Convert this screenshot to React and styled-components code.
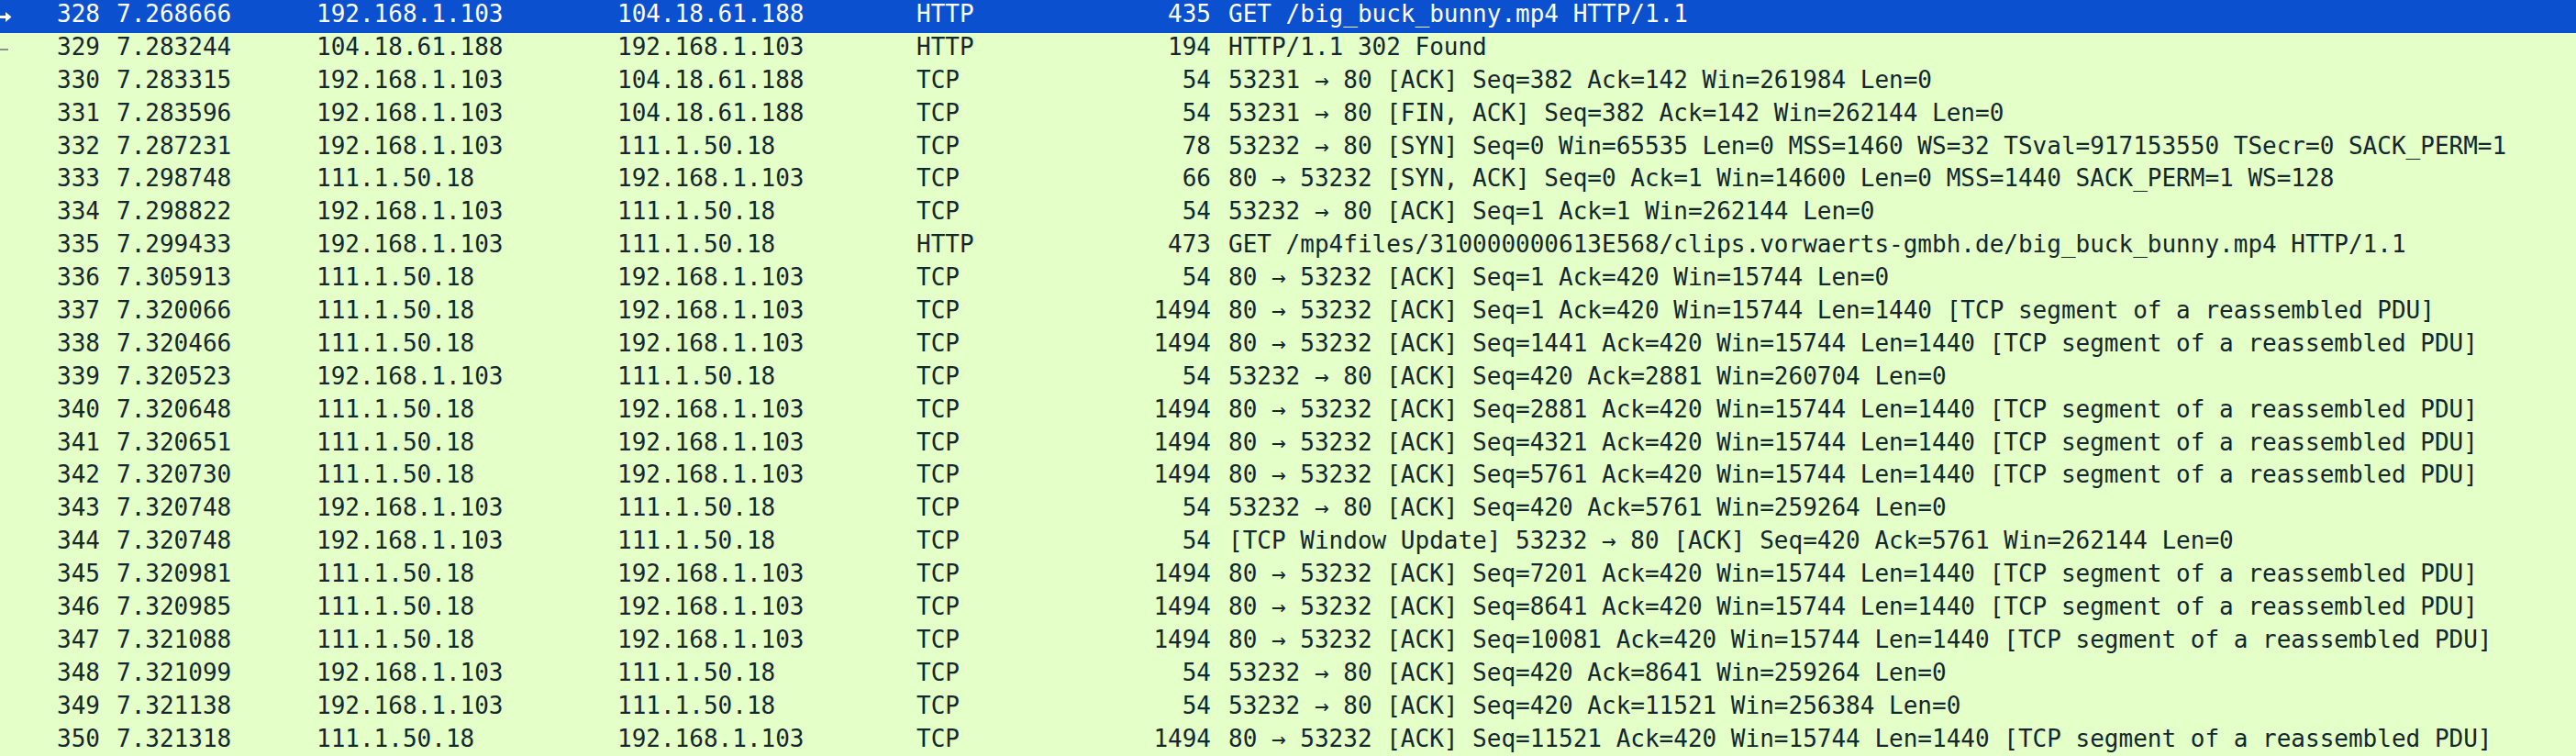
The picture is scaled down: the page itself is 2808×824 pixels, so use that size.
import React from "react";
import styled, { createGlobalStyle } from "styled-components";

const GlobalStyle = createGlobalStyle`
  html, body {
    margin: 0;
    padding: 0;
    background: #e4ffc7;
    overflow: hidden;
  }
`;

const packets = [
  ["328", "7.268666", "192.168.1.103", "104.18.61.188", "HTTP", "435", "GET /big_buck_bunny.mp4 HTTP/1.1"],
  ["329", "7.283244", "104.18.61.188", "192.168.1.103", "HTTP", "194", "HTTP/1.1 302 Found"],
  ["330", "7.283315", "192.168.1.103", "104.18.61.188", "TCP", "54", "53231 → 80 [ACK] Seq=382 Ack=142 Win=261984 Len=0"],
  ["331", "7.283596", "192.168.1.103", "104.18.61.188", "TCP", "54", "53231 → 80 [FIN, ACK] Seq=382 Ack=142 Win=262144 Len=0"],
  ["332", "7.287231", "192.168.1.103", "111.1.50.18", "TCP", "78", "53232 → 80 [SYN] Seq=0 Win=65535 Len=0 MSS=1460 WS=32 TSval=917153550 TSecr=0 SACK_PERM=1"],
  ["333", "7.298748", "111.1.50.18", "192.168.1.103", "TCP", "66", "80 → 53232 [SYN, ACK] Seq=0 Ack=1 Win=14600 Len=0 MSS=1440 SACK_PERM=1 WS=128"],
  ["334", "7.298822", "192.168.1.103", "111.1.50.18", "TCP", "54", "53232 → 80 [ACK] Seq=1 Ack=1 Win=262144 Len=0"],
  ["335", "7.299433", "192.168.1.103", "111.1.50.18", "HTTP", "473", "GET /mp4files/310000000613E568/clips.vorwaerts-gmbh.de/big_buck_bunny.mp4 HTTP/1.1"],
  ["336", "7.305913", "111.1.50.18", "192.168.1.103", "TCP", "54", "80 → 53232 [ACK] Seq=1 Ack=420 Win=15744 Len=0"],
  ["337", "7.320066", "111.1.50.18", "192.168.1.103", "TCP", "1494", "80 → 53232 [ACK] Seq=1 Ack=420 Win=15744 Len=1440 [TCP segment of a reassembled PDU]"],
  ["338", "7.320466", "111.1.50.18", "192.168.1.103", "TCP", "1494", "80 → 53232 [ACK] Seq=1441 Ack=420 Win=15744 Len=1440 [TCP segment of a reassembled PDU]"],
  ["339", "7.320523", "192.168.1.103", "111.1.50.18", "TCP", "54", "53232 → 80 [ACK] Seq=420 Ack=2881 Win=260704 Len=0"],
  ["340", "7.320648", "111.1.50.18", "192.168.1.103", "TCP", "1494", "80 → 53232 [ACK] Seq=2881 Ack=420 Win=15744 Len=1440 [TCP segment of a reassembled PDU]"],
  ["341", "7.320651", "111.1.50.18", "192.168.1.103", "TCP", "1494", "80 → 53232 [ACK] Seq=4321 Ack=420 Win=15744 Len=1440 [TCP segment of a reassembled PDU]"],
  ["342", "7.320730", "111.1.50.18", "192.168.1.103", "TCP", "1494", "80 → 53232 [ACK] Seq=5761 Ack=420 Win=15744 Len=1440 [TCP segment of a reassembled PDU]"],
  ["343", "7.320748", "192.168.1.103", "111.1.50.18", "TCP", "54", "53232 → 80 [ACK] Seq=420 Ack=5761 Win=259264 Len=0"],
  ["344", "7.320748", "192.168.1.103", "111.1.50.18", "TCP", "54", "[TCP Window Update] 53232 → 80 [ACK] Seq=420 Ack=5761 Win=262144 Len=0"],
  ["345", "7.320981", "111.1.50.18", "192.168.1.103", "TCP", "1494", "80 → 53232 [ACK] Seq=7201 Ack=420 Win=15744 Len=1440 [TCP segment of a reassembled PDU]"],
  ["346", "7.320985", "111.1.50.18", "192.168.1.103", "TCP", "1494", "80 → 53232 [ACK] Seq=8641 Ack=420 Win=15744 Len=1440 [TCP segment of a reassembled PDU]"],
  ["347", "7.321088", "111.1.50.18", "192.168.1.103", "TCP", "1494", "80 → 53232 [ACK] Seq=10081 Ack=420 Win=15744 Len=1440 [TCP segment of a reassembled PDU]"],
  ["348", "7.321099", "192.168.1.103", "111.1.50.18", "TCP", "54", "53232 → 80 [ACK] Seq=420 Ack=8641 Win=259264 Len=0"],
  ["349", "7.321138", "192.168.1.103", "111.1.50.18", "TCP", "54", "53232 → 80 [ACK] Seq=420 Ack=11521 Win=256384 Len=0"],
  ["350", "7.321318", "111.1.50.18", "192.168.1.103", "TCP", "1494", "80 → 53232 [ACK] Seq=11521 Ack=420 Win=15744 Len=1440 [TCP segment of a reassembled PDU]"],
];

const List = styled.div`
  width: 100%;
  font-family: "DejaVu Sans Mono", "Liberation Mono", monospace;
  font-size: 26px;
`;

const Row = styled.div`
  position: relative;
  display: grid;
  grid-template-columns: 127px 218px 328px 326px 151px 189px 1fr;
  height: 35.9px;
  line-height: 31px;
  padding-bottom: 4.9px;
  box-sizing: border-box;
  background: ${(p) => (p.$selected ? "#0b51cf" : "#e4ffc7")};
  color: ${(p) => (p.$selected ? "#ffffff" : "#12272e")};
  white-space: pre;
`;

const Cell = styled.div`
  overflow: hidden;
  text-align: ${(p) => (p.$right ? "right" : "left")};
  padding-right: ${(p) => p.$padRight || 0}px;
`;

const Marker = styled.svg`
  position: absolute;
  left: 0;
  top: 8px;
  width: 14px;
  height: 20px;
`;

const RequestMark = () => (
  <Marker viewBox="0 0 14 20">
    <rect x="0" y="9" width="8" height="3" fill="#ffffff" />
    <path d="M6 5 L12.5 10.5 L6 16 Z" fill="#ffffff" />
  </Marker>
);

const ResponseMark = () => (
  <Marker viewBox="0 0 14 20">
    <rect x="0" y="9" width="9" height="2" fill="#8d9490" />
  </Marker>
);

const App = () => (
  <>
    <GlobalStyle />
    <List>
      {packets.map((p, i) => (
        <Row key={p[0]} $selected={i === 0}>
          {i === 0 && <RequestMark />}
          {i === 1 && <ResponseMark />}
          <Cell $right $padRight={18}>{p[0]}</Cell>
          <Cell>{p[1]}</Cell>
          <Cell>{p[2]}</Cell>
          <Cell>{p[3]}</Cell>
          <Cell>{p[4]}</Cell>
          <Cell $right $padRight={19}>{p[5]}</Cell>
          <Cell>{p[6]}</Cell>
        </Row>
      ))}
    </List>
  </>
);

export default App;
